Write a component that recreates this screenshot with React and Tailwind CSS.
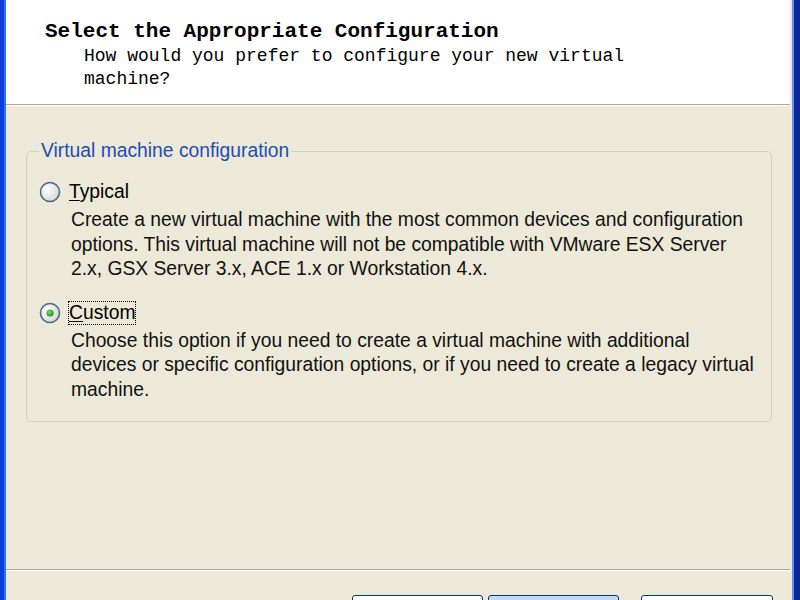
import React from 'react';

// XP-style radio bullet
function Radio({ checked }) {
    return (
        <svg width="22" height="22" viewBox="0 0 22 22" className="shrink-0">
            <defs>
                <radialGradient id={checked ? 'rgc' : 'rgt'} cx="0.35" cy="0.35" r="0.75">
                    <stop offset="0" stopColor="#ffffff" />
                    <stop offset="1" stopColor="#d4d4cc" />
                </radialGradient>
                <radialGradient id="dot" cx="0.4" cy="0.4" r="0.6">
                    <stop offset="0" stopColor="#7be27b" />
                    <stop offset="1" stopColor="#1f8f1f" />
                </radialGradient>
            </defs>
            <circle cx="11" cy="11" r="9.5" fill={`url(#${checked ? 'rgc' : 'rgt'})`} stroke="#4a6a8a" strokeWidth="1.6" />
            {checked && <circle cx="11" cy="11" r="3.6" fill="url(#dot)" />}
        </svg>
    );
}

function Option({ underline, rest, checked, lines, focused }) {
    return (
        <div>
            <div className="flex items-center gap-[8px] h-[22px]">
                <Radio checked={checked} />
                <span className={`text-[19.3px] leading-[22px] text-black ${focused ? 'outline outline-1 outline-dotted outline-black' : ''}`}>
                    <span className="underline underline-offset-2">{underline}</span>{rest}
                </span>
            </div>
            <div className="pl-[32px] pt-[5px] text-[19.3px] leading-[24.5px] text-[#111]">
                {lines.map((l, i) => (
                    <div key={i}>{l}</div>
                ))}
            </div>
        </div>
    );
}

export default function App() {
    return (
        <div className="w-[800px] h-[600px] overflow-hidden flex bg-[#ECE9D8]" style={{ fontFamily: '"Liberation Sans", Arial, sans-serif' }}>
            {/* left window frame */}
            <div className="w-[6px] flex">
                <div className="w-[4px] bg-[#0A3FD8]" />
                <div className="w-[2px] bg-[#3A6FF0]" />
            </div>

            <div className="flex-1 flex flex-col">
                {/* header */}
                <div className="h-[104px] bg-white pl-[39px] pt-[19px]" style={{ fontFamily: '"Liberation Mono", "Courier New", monospace' }}>
                    <div className="text-[21px] leading-[26px] font-bold text-black">Select the Appropriate Configuration</div>
                    <div className="pl-[39px] text-[18px] leading-[23px] text-black">
                        <div>How would you prefer to configure your new virtual</div>
                        <div>machine?</div>
                    </div>
                </div>
                <div className="h-[1px] bg-[#ACA899]" />
                <div className="h-[1px] bg-white" />

                {/* body */}
                <div className="flex-1 pl-[20px] pr-[18px] pt-[34px]">
                    <fieldset className="border border-[#D0D0BF] rounded-[5px] h-[282px] px-[12px] pt-[19px]">
                        <legend className="px-[2px] text-[19.3px] leading-[22px] text-[#1F4CB5]">Virtual machine configuration</legend>
                        <div className="flex flex-col gap-[20px]">
                            <Option
                                underline="T"
                                rest="ypical"
                                lines={[
                                    'Create a new virtual machine with the most common devices and configuration',
                                    'options. This virtual machine will not be compatible with VMware ESX Server',
                                    '2.x, GSX Server 3.x, ACE 1.x or Workstation 4.x.',
                                ]}
                            />
                            <Option
                                checked
                                focused
                                underline="C"
                                rest="ustom"
                                lines={[
                                    'Choose this option if you need to create a virtual machine with additional',
                                    'devices or specific configuration options, or if you need to create a legacy virtual',
                                    'machine.',
                                ]}
                            />
                        </div>
                    </fieldset>
                </div>

                {/* footer */}
                <div className="h-[1px] bg-[#ACA899]" />
                <div className="h-[1px] bg-white" />
                <div className="h-[29px] flex items-start pt-[24px] pl-[346px]">
                    <div className="w-[131px] h-[10px] border border-[#003C74] rounded-t-[3px] bg-white" />
                    <div className="ml-[5px] w-[131px] h-[10px] border border-[#003C74] rounded-t-[3px] bg-[#C6D8F6]" />
                    <div className="ml-[22px] w-[132px] h-[10px] border border-[#003C74] rounded-t-[3px] bg-white" />
                </div>
            </div>

            {/* right window frame */}
            <div className="w-[10px] flex">
                <div className="w-[2px] bg-[#F0E8E8]" />
                <div className="w-[2px] bg-[#6A8EE8]" />
                <div className="w-[6px] bg-[#0A2A9A]" />
            </div>
        </div>
    );
}
